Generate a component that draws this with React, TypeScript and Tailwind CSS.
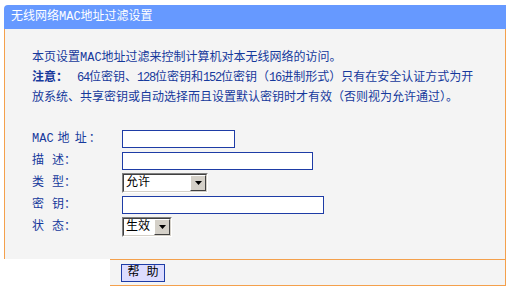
import React from 'react'

const orange = 'border-[#f4a04c]'

function Field({ label, children }: { label: React.ReactNode; children: React.ReactNode }) {
    return (
        <div className="flex items-center h-[22px]">
            <div className="w-[90px] flex items-center whitespace-nowrap">{label}</div>
            {children}
        </div>
    )
}

function TextBox({ width }: { width: string }) {
    return <input readOnly className={`${width} h-[18px] border border-[#1e3ca6] bg-white outline-none`} />
}

function DropDown({ value, width }: { value: string; width: string }) {
    return (
        <div className={`${width} h-[20px] border border-t-[#808080] border-l-[#808080] border-b-[#ffffff] border-r-[#ffffff]`}>
            <div className="h-full border border-t-[#404040] border-l-[#404040] border-b-[#d4d0c8] border-r-[#d4d0c8] bg-white flex items-center">
                <span className="flex-1 pl-[2px] text-black leading-none">{value}</span>
                <div className="w-[16px] h-full bg-[#d4d0c8] border border-t-[#ffffff] border-l-[#ffffff] border-b-[#404040] border-r-[#404040] flex items-center justify-center">
                    <svg width="7" height="4" viewBox="0 0 7 4">
                        <path d="M0 0h7L3.5 4z" fill="#000" />
                    </svg>
                </div>
            </div>
        </div>
    )
}

// half-width digits, like the bitmap font of the original page
function Num({ children }: { children: string }) {
    return <span className="tracking-[-1.2px]">{children}</span>
}

export default function App() {
    return (
        <div className="w-[514px] h-[289px] bg-white overflow-hidden pt-[5px] pl-[4px] text-[12px] font-[family-name:'Liberation_Mono','Noto_Sans_CJK_SC',monospace]">
            <div className="w-[502px]">
                {/* Title bar */}
                <div className="h-[24px] bg-[#6699ff] rounded-tl-[4px] pl-[7px] flex items-center text-white leading-none">
                    无线网络MAC地址过滤设置
                </div>

                {/* Main panel */}
                <div className={`h-[230px] bg-[#f4f4f4] border-l border-r ${orange} pl-[27px] pt-[19px] text-[#16399c]`}>
                    <div className="leading-[20px] whitespace-nowrap">
                        <div>本页设置MAC地址过滤来控制计算机对本无线网络的访问。</div>
                        <div>
                            <span className="font-bold">注意：</span>
                            <span className="ml-[9px]">
                                <Num>64</Num>位密钥、<Num>128</Num>位密钥和<Num>152</Num>位密钥（<Num>16</Num>进制形式）只有在安全认证方式为开
                            </span>
                        </div>
                        <div>放系统、共享密钥或自动选择而且设置默认密钥时才有效（否则视为允许通过）。</div>
                    </div>

                    <div className="mt-[20px] flex flex-col">
                        <Field
                            label={
                                <>
                                    <span>MAC</span>
                                    <span className="ml-[4px]">地</span>
                                    <span className="ml-[5px]">址</span>
                                    <span className="ml-[2px]">：</span>
                                </>
                            }
                        >
                            <TextBox width="w-[113px]" />
                        </Field>
                        <Field
                            label={
                                <>
                                    <span>描</span>
                                    <span className="ml-[8px]">述</span>
                                    <span>：</span>
                                </>
                            }
                        >
                            <TextBox width="w-[191px]" />
                        </Field>
                        <Field
                            label={
                                <>
                                    <span>类</span>
                                    <span className="ml-[8px]">型</span>
                                    <span>：</span>
                                </>
                            }
                        >
                            <DropDown value="允许" width="w-[86px]" />
                        </Field>
                        <Field
                            label={
                                <>
                                    <span>密</span>
                                    <span className="ml-[8px]">钥</span>
                                    <span>：</span>
                                </>
                            }
                        >
                            <TextBox width="w-[202px]" />
                        </Field>
                        <Field
                            label={
                                <>
                                    <span>状</span>
                                    <span className="ml-[8px]">态</span>
                                    <span>：</span>
                                </>
                            }
                        >
                            <DropDown value="生效" width="w-[50px]" />
                        </Field>
                    </div>
                </div>

                {/* Button row */}
                <div className="flex h-[27px]">
                    <div className="w-[106px] bg-white" />
                    <div className={`flex-1 bg-[#f4f4f4] border-t border-b border-r ${orange} pl-[11px] flex items-center`}>
                        <button className="w-[44px] h-[18px] bg-[#dcdcff] border border-[#1e3ca6] text-black leading-none flex items-center justify-center">
                            帮 助
                        </button>
                    </div>
                </div>
            </div>
        </div>
    )
}
